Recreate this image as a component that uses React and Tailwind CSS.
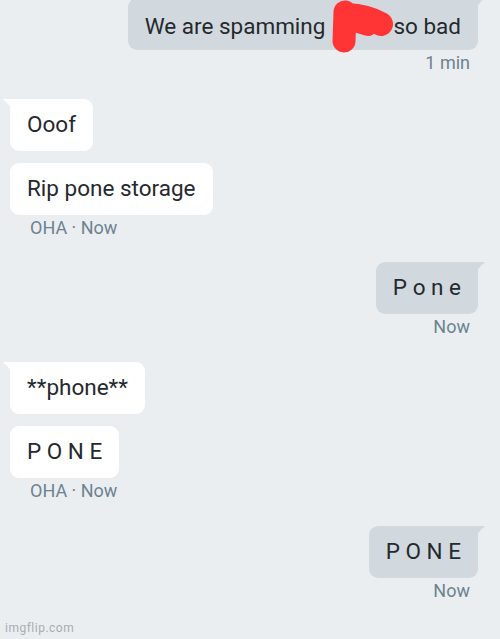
import React from "react";

const font = { fontFamily: "Roboto, 'Noto Sans', Arial, sans-serif" };

function Tail({ side, color }) {
    // little wedge on the top corner of a bubble
    if (side === "right") {
        return (
            <svg className="absolute -right-[7px] top-0" width="9" height="9" viewBox="0 0 9 9">
                <path d="M0 0 L9 0 Q4 4 1 9 L0 9 Z" fill={color} />
            </svg>
        );
    }
    return (
        <svg className="absolute -left-[7px] top-0" width="9" height="9" viewBox="0 0 9 9">
            <path d="M9 0 L0 0 Q5 4 8 9 L9 9 Z" fill={color} />
        </svg>
    );
}

function Sent({ children, tail, className = "" }) {
    return (
        <div className={`relative self-end mr-[22px] h-[52px] shrink-0 flex items-center px-[17px] rounded-[9px] bg-[#d2d9de] text-[22.5px] text-[#25292e] ${tail ? "rounded-tr-none" : ""} ${className}`}>
            {tail && <Tail side="right" color="#d2d9de" />}
            {children}
        </div>
    );
}

function Received({ children, tail, className = "" }) {
    return (
        <div className={`relative self-start ml-[10px] h-[52px] shrink-0 flex items-center px-[17px] rounded-[9px] bg-white text-[22.5px] text-[#25292e] ${tail ? "rounded-tl-none" : ""} ${className}`}>
            {tail && <Tail side="left" color="#ffffff" />}
            {children}
        </div>
    );
}

function Meta({ children, right }) {
    return (
        <div className={`h-[26px] shrink-0 leading-[26px] text-[18px] text-[#6c8390] ${right ? "self-end mr-[30px]" : "self-start ml-[30px]"}`}>
            {children}
        </div>
    );
}

export default function App() {
    return (
        <div style={font} className="relative w-[500px] h-[639px] overflow-hidden bg-[#ebeef1] flex flex-col">
            <Sent tail className="-mt-[2px] pt-[5px]">
                <span>We are spamming</span>
                <span className="inline-block w-[68px]"></span>
                <span>so bad</span>
                {/* red scribble drawn over the hidden word */}
                <svg className="absolute left-[200px] top-[2px]" width="80" height="60" viewBox="0 0 80 60">
                    <path d="M18 15 Q40 16 53 24" stroke="#ff3535" strokeWidth="24" strokeLinecap="round" fill="none" />
                    <path d="M17 12 L16 41" stroke="#ff3535" strokeWidth="23" strokeLinecap="round" fill="none" />
                    <path d="M20 20 L40 26" stroke="#ff3535" strokeWidth="20" strokeLinecap="round" fill="none" />
                </svg>
            </Sent>
            <Meta right>1 min</Meta>

            <Received tail className="mt-[23px]">Ooof</Received>
            <Received className="mt-[12px]">Rip pone storage</Received>
            <Meta>OHA · Now</Meta>

            <Sent tail className="mt-[21px]">P o n e</Sent>
            <Meta right>Now</Meta>

            <Received tail className="mt-[22px]">**phone**</Received>
            <Received className="mt-[12px]">P O N E</Received>
            <Meta>OHA · Now</Meta>

            <Sent tail className="mt-[22px]">P O N E</Sent>
            <Meta right>Now</Meta>

            <div className="absolute left-[5px] bottom-[2px] text-[12px] tracking-[0.5px] text-[#a8adb1]">imgflip.com</div>
        </div>
    );
}
